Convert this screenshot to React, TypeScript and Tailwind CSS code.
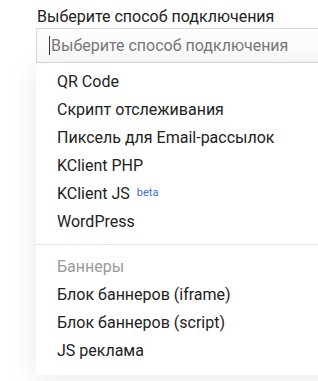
import React from "react";

const items1 = ["QR Code", "Скрипт отслеживания", "Пиксель для Email-рассылок", "KClient PHP"];
const items2 = ["Блок баннеров (iframe)", "Блок баннеров (script)", "JS реклама"];

export default function App() {
  return (
    <div className="w-[318px] h-[381px] overflow-hidden bg-white" style={{ fontFamily: "Roboto, 'Noto Sans', sans-serif" }}>
      <div className="pt-[7px] pl-[36px]">
        <div className="w-[320px]">
          <div className="h-[21px] pl-px text-[16px] leading-[20px] text-[#222]">Выберите способ подключения</div>
          <div className="h-[35px] border border-[#d9d9d9] bg-[#fcfcfc] flex items-center pl-[12px] text-[16px] text-[#777]">
            <span className="w-px h-[19px] bg-[#333] mr-px"></span>
            Выберите способ подключения
          </div>
          <div className="bg-white pt-[5px] pb-[10px] shadow-[0_4px_30px_rgba(0,0,0,0.09)] text-[16px] text-[#222]">
            {items1.map((t) => (
              <div key={t} className="h-[28px] leading-[28px] pl-[21px]">{t}</div>
            ))}
            <div className="h-[28px] leading-[28px] pl-[21px]">
              KClient JS <sup className="text-[11px] text-[#3b6fd0] ml-[3px] relative -top-[3px]">beta</sup>
            </div>
            <div className="h-[28px] leading-[28px] pl-[21px]">WordPress</div>
            <div className="my-[8px] h-px bg-[#e4e4e4]"></div>
            <div className="h-[28px] leading-[28px] pl-[21px] text-[#999]">Баннеры</div>
            {items2.map((t) => (
              <div key={t} className="h-[28px] leading-[28px] pl-[21px]">{t}</div>
            ))}
          </div>
        </div>
      </div>
    </div>
  );
}
